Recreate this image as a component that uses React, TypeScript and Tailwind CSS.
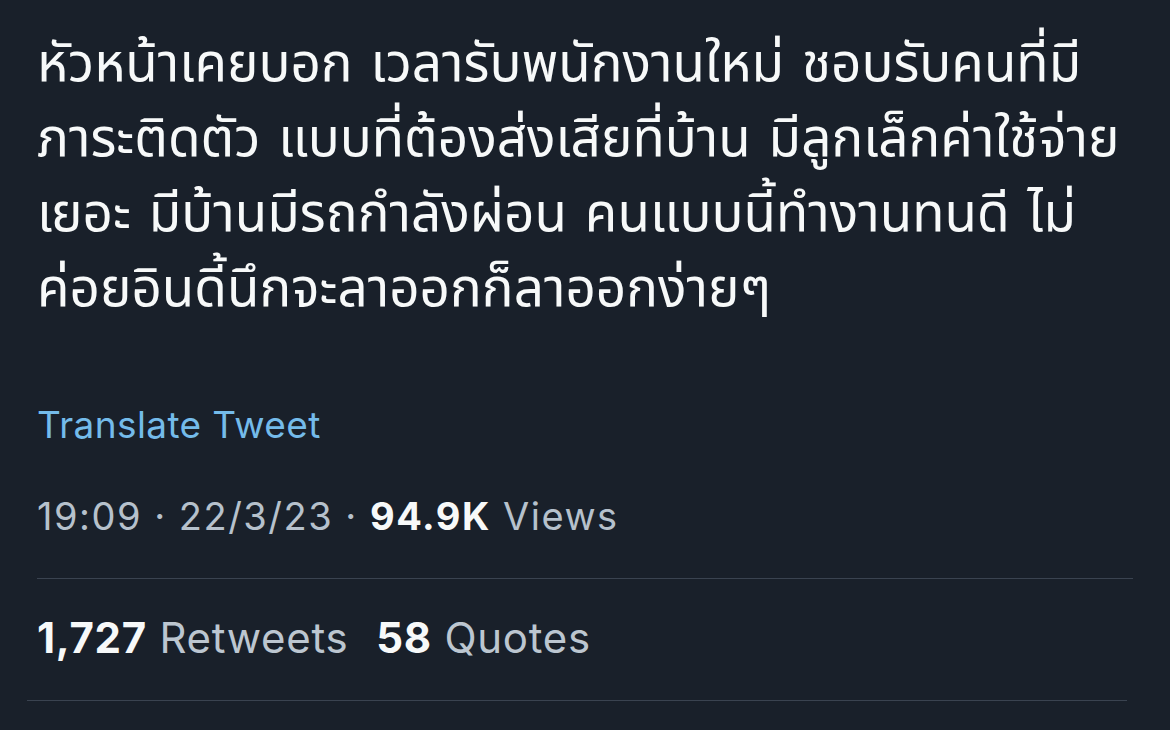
export default function App() {
	const lines = [
		"หัวหน้าเคยบอก เวลารับพนักงานใหม่ ชอบรับคนที่มี",
		"ภาระติดตัว แบบที่ต้องส่งเสียที่บ้าน มีลูกเล็กค่าใช้จ่าย",
		"เยอะ มีบ้านมีรถกำลังผ่อน คนแบบนี้ทำงานทนดี ไม่",
		"ค่อยอินดี้นึกจะลาออกก็ลาออกง่ายๆ",
	];

	return (
		<div
			className="w-[1170px] h-[730px] overflow-hidden bg-[#19202a] text-[#f7f9f9]"
			style={{ fontFamily: 'Inter, "Noto Sans Thai", "Noto Sans", "Liberation Sans", sans-serif' }}
		>
			{/* ข้อความทวีต */}
			<div className="pl-[37px] pt-[25px] text-[53px] leading-[75px] [word-spacing:3px]">
				{lines.map((line) => (
					<div key={line}>{line}</div>
				))}
			</div>

			<div className="pl-[37px] mt-[78px] text-[37px] leading-[44px] tracking-[0.4px] text-[#74bbea]">
				Translate Tweet
			</div>

			<div className="pl-[37px] mt-[47px] text-[38px] leading-[44px] tracking-[1.5px] text-[#b6c1cc]">
				19:09 · 22/3/23 · <span className="font-bold text-[#f7f9f9]">94.9K</span> Views
			</div>

			<div className="ml-[37px] mr-[37px] mt-[40px] h-px bg-[#3a4350]" />

			<div className="pl-[37px] mt-[34px] text-[42px] leading-[50px] tracking-[0.7px] text-[#bcc6d0] flex gap-[28px]">
				<span>
					<span className="font-bold text-[#f7f9f9]">1,727</span> Retweets
				</span>
				<span>
					<span className="font-bold text-[#f7f9f9]">58</span> Quotes
				</span>
			</div>

			<div className="ml-[27px] mr-[43px] mt-[37px] h-px bg-[#3a4350]" />
		</div>
	);
}
